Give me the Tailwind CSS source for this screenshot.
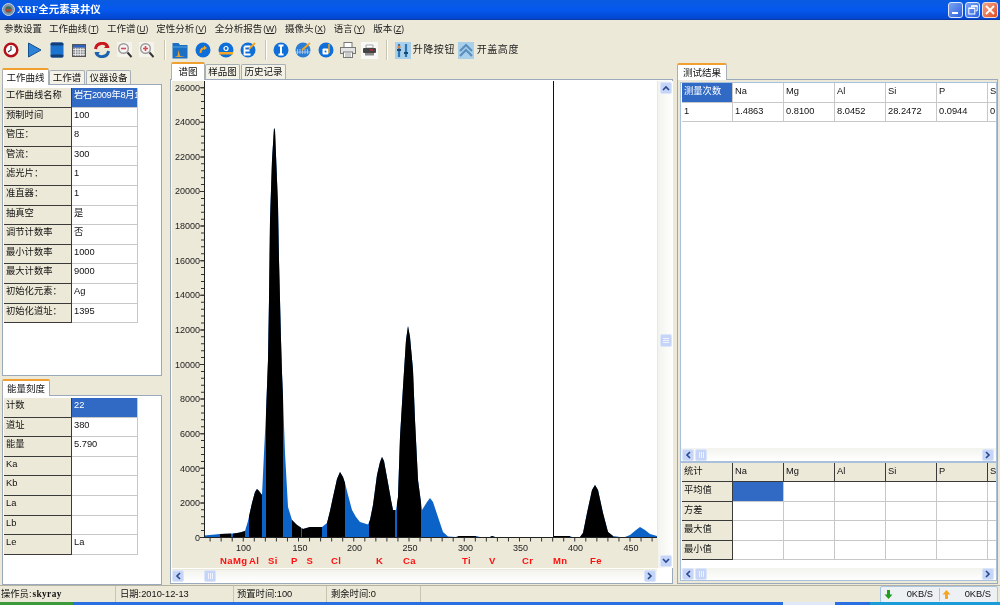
<!DOCTYPE html>
<html lang="zh">
<head>
<meta charset="utf-8">
<title>XRF全元素录井仪</title>
<script src="https://cdn.jsdelivr.net/npm/@tailwindcss/browser@4"></script>
</head>
<body class="m-0 overflow-hidden bg-[#ece9d8]">
<div class="w-[1000px] h-[605px] flex flex-col overflow-hidden bg-[#ece9d8] text-[#111] text-[9.3px] leading-[12px] font-['Liberation_Sans','Noto_Sans_CJK_SC',sans-serif] blur-[0.35px]">

  <!-- title bar -->
  <div class="h-[20px] shrink-0 flex items-center pl-[2px] pr-[2px] bg-gradient-to-b from-[#0a5be0] via-[#0558ee] to-[#0345cf] border-b border-[#0a3aa8]">
    <svg width="13" height="13" viewBox="0 0 13 13" class="shrink-0"><circle cx="6.5" cy="6.5" r="6" fill="#7f95a8" stroke="#c9d4dc" stroke-width="1"/><circle cx="6.5" cy="6.5" r="3.2" fill="#3d6b58"/><path d="M4 6h5v2.5H4z" fill="#b0463d"/></svg>
    <span class="ml-[2px] text-white font-bold text-[10.4px] font-['Liberation_Serif','Noto_Sans_CJK_SC',serif]">XRF全元素录井仪</span>
    <div class="ml-auto flex gap-[2px]">
      <div class="w-[15px] h-[16px] rounded-[3px] border border-[#dfe8fb] bg-gradient-to-br from-[#7ea3f2] to-[#2a5fe0] flex items-end p-[3px]"><div class="w-[6px] h-[2px] bg-white"></div></div>
      <div class="w-[15px] h-[16px] rounded-[3px] border border-[#dfe8fb] bg-gradient-to-br from-[#7ea3f2] to-[#2a5fe0] flex items-center justify-center"><svg width="10" height="10" viewBox="0 0 10 10" fill="none" stroke="#fff"><path d="M3.5 2.5V.8h5.7v5H7.5"/><rect x=".8" y="3" width="6" height="6"/><path d="M1 3.5h6M3.5 1.2h6" stroke-width="1.2"/></svg></div>
      <div class="w-[16px] h-[16px] rounded-[3px] border border-[#f1dbd2] bg-gradient-to-br from-[#f0a488] to-[#dc4a1c] flex items-center justify-center"><svg width="10" height="10" viewBox="0 0 10 10" stroke="#fff" stroke-width="1.8"><path d="M1 1l8 8M9 1L1 9"/></svg></div>
    </div>
  </div>

  <!-- menu -->
  <div class="h-[18px] shrink-0 flex items-center gap-[8px] pl-[4px] text-[9.5px] text-[#222] [&_small]:text-[8.5px] [&_small]:ml-[1px]">
    <span>参数设置</span>
    <span class="-ml-[1px]">工作曲线<small>(<u>T</u>)</small></span>
    <span>工作谱<small>(<u>U</u>)</small></span>
    <span>定性分析<small>(<u>V</u>)</small></span>
    <span>全分析报告<small>(<u>W</u>)</small></span>
    <span>摄像头<small>(<u>X</u>)</small></span>
    <span>语言<small>(<u>Y</u>)</small></span>
    <span>版本<small>(<u>Z</u>)</small></span>
  </div>

  <!-- toolbar -->
  <div class="h-[24px] shrink-0 flex items-center [&>i]:w-[22.7px] [&>i]:h-[20px] [&>i]:flex [&>i]:items-center [&>i]:justify-center [&>i]:shrink-0">
    <i><svg width="16" height="16" viewBox="0 0 16 16"><circle cx="8" cy="8" r="6.3" fill="#fff" stroke="#b3101a" stroke-width="2.4"/><path d="M8 4v4l-3 2" fill="none" stroke="#234" stroke-width="1.1"/></svg></i>
    <i><svg width="15" height="16" viewBox="0 0 15 16"><path d="M1.5 1L14 8 1.5 15z" fill="#2f83d6" stroke="#12508f"/></svg></i>
    <i><svg width="14" height="16" viewBox="0 0 14 16"><rect x=".5" y=".5" width="13" height="15" rx="2" fill="#1d74cf"/><rect x=".5" y=".5" width="13" height="3" rx="1.5" fill="#123f78"/><rect x=".5" y="12.5" width="13" height="3" rx="1.5" fill="#123f78"/></svg></i>
    <i><svg width="14" height="13" viewBox="0 0 14 13"><rect x=".5" y=".5" width="13" height="12" fill="#8b8f96" stroke="#555"/><rect x="1" y="1" width="12" height="2.4" fill="#2e62c0"/><path d="M1 5.5h12M1 8h12M1 10.500h12M3.500 4v8M6 4v8M8.500 4v8M11 4v8" stroke="#eee" stroke-width=".8"/></svg></i>
    <i><svg width="16" height="16" viewBox="0 0 16 16" fill="none"><path d="M1.500 7A6.500 6.500 0 0 1 14 5.500" stroke="#c8161d" stroke-width="3"/><path d="M14.500 9A6.500 6.500 0 0 1 2 10.500" stroke="#1e62ae" stroke-width="3"/><path d="M10 6h5.500L13 2.500z" fill="#c8161d"/><path d="M6 10H.5L3 13.500z" fill="#1e62ae"/></svg></i>
    <i><svg width="16" height="16" viewBox="0 0 16 16"><rect width="15" height="15" fill="#f4f3ec"/><circle cx="6.500" cy="6.500" r="4.800" fill="#f8f4f4" stroke="#9a9a9a" stroke-width="1.400"/><path d="M4 6.500h5" stroke="#d64b55" stroke-width="1.600"/><path d="M10.500 10.500l4 4.500" stroke="#333" stroke-width="2"/></svg></i>
    <i><svg width="16" height="16" viewBox="0 0 16 16"><rect width="15" height="15" fill="#f4f3ec"/><circle cx="6.500" cy="6.500" r="4.800" fill="#f8f4f4" stroke="#9a9a9a" stroke-width="1.400"/><path d="M4 6.500h5M6.500 4v5" stroke="#d64b55" stroke-width="1.600"/><path d="M10.500 10.500l4 4.500" stroke="#333" stroke-width="2"/></svg></i>
    <div class="w-[2px] h-[20px] ml-[5px] mr-[3px] bg-[#c8c5b2] border-r border-white shrink-0"></div>
    <i><svg width="16" height="17" viewBox="0 0 16 17"><path d="M.5 1h6l1.500 2h7.500v13.500H.5z" fill="#1c70c4"/><path d="M.5 5h15" stroke="#5aa0e0"/><path d="M2.500 15l3-1 1-6 1.500 6 5 1z" fill="#f0a030"/></svg></i>
    <i><svg width="16" height="16" viewBox="0 0 16 16"><circle cx="8" cy="8" r="7.500" fill="#0f6fd8"/><path d="M5.500 11c0-3 1.500-5 4.500-5" fill="none" stroke="#f5a623" stroke-width="2"/><path d="M9 3.500l3 2.500-3 2z" fill="#f5a623"/></svg></i>
    <i><svg width="16" height="16" viewBox="0 0 16 16"><circle cx="8" cy="8" r="7.500" fill="#0f6fd8"/><rect x="1" y="10" width="14" height="2.500" fill="#f5a623"/><circle cx="8" cy="6.500" r="2" fill="none" stroke="#fff" stroke-width="1.200"/></svg></i>
    <i><svg width="16" height="16" viewBox="0 0 16 16"><circle cx="8" cy="8" r="7.500" fill="#0f6fd8"/><path d="M4.500 4.500h6M4.500 4.500v8h6M4.500 8.500h5" fill="none" stroke="#fff" stroke-width="1.800"/><path d="M9 7l6-6" stroke="#f5a623" stroke-width="1.800"/></svg></i>
    <div class="w-[2px] h-[20px] ml-[5px] mr-[3px] bg-[#c8c5b2] border-r border-white shrink-0"></div>
    <i><svg width="16" height="16" viewBox="0 0 16 16"><circle cx="8" cy="8" r="7.500" fill="#0f6fd8"/><path d="M5.500 3.500h5M5.500 12.500h5M8 3.500v9" stroke="#fff" stroke-width="2"/></svg></i>
    <i><svg width="17" height="16" viewBox="0 0 17 16"><circle cx="8" cy="8" r="7.500" fill="#2b7cd3"/><path d="M1 10h14M2.500 7v5M5 7v5M7.500 7v5M10 7v5M12.500 7v5" stroke="#a8c9ee" stroke-width=".9"/><path d="M7 8l8-7" stroke="#f5a623" stroke-width="1.800"/></svg></i>
    <i><svg width="16" height="16" viewBox="0 0 16 16"><circle cx="8" cy="8" r="7.500" fill="#0f6fd8"/><rect x="4.500" y="6.500" width="6" height="6" rx="1" fill="#fff"/><circle cx="7.500" cy="9.500" r="1" fill="#0f6fd8"/><path d="M11 2v9" stroke="#f5a623" stroke-width="1.500"/></svg></i>
    <i class="w-[21px]!"><svg width="16" height="16" viewBox="0 0 16 16"><rect x="4" y=".5" width="8" height="5" fill="#fff" stroke="#777"/><rect x=".5" y="5.500" width="15" height="6" fill="#e4e4e4" stroke="#777"/><rect x="3.500" y="10" width="9" height="5.500" fill="#fff" stroke="#777"/><path d="M5 12h6M5 14h6" stroke="#999"/></svg></i>
    <i class="w-[21px]!"><svg width="17" height="17" viewBox="0 0 17 17"><rect width="17" height="17" fill="#f8f8f6"/><path d="M5 3h7v3H5z" fill="#fff" stroke="#888" stroke-width=".7"/><rect x="2" y="6" width="13" height="5" rx="1" fill="#444"/><rect x="4" y="11" width="9" height="2.500" fill="#888"/><rect x="9" y="7.500" width="3" height="1" fill="#e23"/></svg></i>
    <div class="w-[2px] h-[20px] ml-[6px] mr-[7px] bg-[#c8c5b2] border-r border-white shrink-0"></div>
    <svg width="16" height="17" viewBox="0 0 16 17" class="shrink-0"><rect width="16" height="17" fill="#a9d0ea"/><path d="M4 2v13M11 2v13" stroke="#2d74b0" stroke-width="2.200"/><path d="M2 8h4M9 11h4" stroke="#16497a" stroke-width="2"/><circle cx="4" cy="5" r="1.500" fill="#e57d3a"/></svg>
    <span class="ml-[2px] w-[45px] shrink-0 text-[10px] tracking-[0.6px] text-[#222]">升降按钮</span>
    <svg width="16" height="17" viewBox="0 0 16 17" class="shrink-0"><rect width="16" height="17" fill="#a9d0ea"/><path d="M2 9l6-6 6 6M2 14l6-6 6 6" fill="none" stroke="#5b8fc0" stroke-width="2.200"/></svg>
    <span class="ml-[3px] text-[10px] tracking-[0.6px] text-[#222]">开盖高度</span>
  </div>

  <!-- workspace -->
  <div class="h-[523px] shrink-0 flex">

    <!-- left column -->
    <div class="w-[170px] shrink-0 pl-[2px] pr-[8px] flex flex-col">
      <div class="h-[22px] shrink-0 flex items-end">
        <div class="h-[17px] w-[47px] -mb-px z-10 bg-white border-x border-[#a7b0b4] border-t-2 border-t-[#f0a030] rounded-t-[2px] text-center text-[9.5px] leading-[13px] pt-[1px]">工作曲线</div>
        <div class="h-[14.500px] w-[36px] bg-[#f4f2e6] border-x border-t border-[#a7b0b4] rounded-t-[2px] text-center text-[9.5px] leading-[13px]">工作谱</div>
        <div class="h-[14.500px] w-[45px] ml-px bg-[#f4f2e6] border-x border-t border-[#a7b0b4] rounded-t-[2px] text-center text-[9.5px] leading-[13px]">仪器设备</div>
      </div>
      <div class="h-[292px] shrink-0 bg-white border border-[#9aa9bb] pt-[3px] pl-[1px]">
        <div class="grid grid-cols-[68px_66px] auto-rows-[19.600px] w-[134px] [&>b]:font-normal [&>b]:bg-[#ece9d8] [&>b]:border-r-[1.5px] [&>b]:border-b-[1.5px] [&>b]:border-[#3a3a3a] [&>b]:pl-[2px] [&>b]:pt-[1px] [&>span]:border-r [&>span]:border-b [&>span]:border-[#c8c8c8] [&>span]:pl-[2px] [&>span]:pt-[1px]">
          <b>工作曲线名称</b><span class="bg-[#316ac5] text-white overflow-hidden whitespace-nowrap tracking-[-0.3px]">岩石2009年8月1</span>
          <b>预制时间</b><span>100</span>
          <b>管压：</b><span>8</span>
          <b>管流：</b><span>300</span>
          <b>滤光片：</b><span>1</span>
          <b>准直器：</b><span>1</span>
          <b>抽真空</b><span>是</span>
          <b>调节计数率</b><span>否</span>
          <b>最小计数率</b><span>1000</span>
          <b>最大计数率</b><span>9000</span>
          <b>初始化元素：</b><span>Ag</span>
          <b>初始化道址：</b><span>1395</span>
        </div>
      </div>
      <div class="h-[19px] shrink-0 flex items-end">
        <div class="h-[17px] w-[48px] -mb-px z-10 bg-white border-x border-[#a7b0b4] border-t-2 border-t-[#f0a030] rounded-t-[2px] text-center text-[9.5px] leading-[13px] pt-[1px]">能量刻度</div>
      </div>
      <div class="h-[190px] shrink-0 bg-white border border-[#9aa9bb] pt-[2px] pl-[1px]">
        <div class="grid grid-cols-[68px_66px] auto-rows-[19.600px] w-[134px] [&>b]:font-normal [&>b]:bg-[#ece9d8] [&>b]:border-r-[1.5px] [&>b]:border-b-[1.5px] [&>b]:border-[#3a3a3a] [&>b]:pl-[2px] [&>b]:pt-[1px] [&>span]:border-r [&>span]:border-b [&>span]:border-[#c8c8c8] [&>span]:pl-[2px] [&>span]:pt-[1px]">
          <b>计数</b><span class="bg-[#316ac5] text-white">22</span>
          <b>道址</b><span>380</span>
          <b>能量</b><span>5.790</span>
          <b>Ka</b><span></span>
          <b>Kb</b><span></span>
          <b>La</b><span></span>
          <b>Lb</b><span></span>
          <b>Le</b><span>La</span>
        </div>
      </div>
    </div>

    <!-- centre column -->
    <div class="w-[503px] shrink-0 flex flex-col">
      <div class="h-[17px] shrink-0 flex items-end pl-[1px]">
        <div class="h-[18px] w-[34px] -mb-px z-10 bg-white border-x border-[#a7b0b4] border-t-2 border-t-[#f0a030] rounded-t-[2px] text-center text-[9.5px] leading-[13px] pt-[1px]">谱图</div>
        <div class="h-[15px] w-[35px] bg-[#f4f2e6] border-x border-t border-[#a7b0b4] rounded-t-[2px] text-center text-[9.5px] leading-[13px]">样品图</div>
        <div class="h-[15px] w-[45px] ml-[1px] bg-[#f4f2e6] border-x border-t border-[#a7b0b4] rounded-t-[2px] text-center text-[9.5px] leading-[13px]">历史记录</div>
      </div>
      <div class="h-[505px] shrink-0 bg-white border border-[#9aa9bb] pl-[1px] pt-[1px] flex flex-col">
        <div class="h-[487px] shrink-0 flex">
          <svg width="486" height="487" viewBox="172 81 486 487" class="shrink-0 block" font-family="'Liberation Sans',sans-serif" font-size="9" fill="#222">
            <defs>
              <polygon id="spec" points="204,537 204,535.500 215,534.500 220,534 234,533.500 240,532.500 245,531 248,521 252,503 255,492 257,489 259,491 262,495 262.500,485 264,453 266,413 268,360 269,300 270,220 272,160 274,128 275,130 276,155 278,205 279,260 280,300 281,340 282,373 283,397 285,453 288,507 292,520 297,525 303,529 310,527 322,527 327,523 330,511 333,497 337,479 340,472 343,477 345,483 348,495 352,510 356,517 360,522 368,524.500 370,520 373,505 377,475 380,462 382,457 384,461 388,483 391,500 393,510 396,510 398,497 400,437 403,387 406,340 408,326 410,337 413,370 415,420 418,480 422,510 427,502 430,498 433,502 438,517 443,532 448,536.500 456,537 458,536 476,536 480,537 490,537 492,536 495,537 553,537 553,536 570,536 572,537 580,537 583,533 587,513 592,490 595,485 598,490 603,513 608,532 613,536 620,537 625,537 630,535 636,530 640,527 645,530 650,534 657,536 657,537"/>
              <clipPath id="black">
                <rect x="220" y="81" width="11" height="460"/>
                <rect x="233" y="81" width="12" height="460"/>
                <rect x="249" y="81" width="13" height="460"/>
                <rect x="266" y="81" width="17" height="460"/>
                <rect x="292" y="81" width="9" height="460"/>
                <rect x="302" y="81" width="20" height="460"/>
                <rect x="327" y="81" width="18" height="460"/>
                <rect x="369" y="81" width="26" height="460"/>
                <rect x="397" y="81" width="24" height="460"/>
                <rect x="458" y="81" width="18" height="460"/>
                <rect x="490" y="81" width="5" height="460"/>
                <rect x="553" y="81" width="17" height="460"/>
                <rect x="580" y="81" width="33" height="460"/>
              </clipPath>
            </defs>
            <rect x="172" y="81" width="486" height="487" fill="#ece9d8"/>
            <rect x="204.500" y="81" width="452.500" height="456.500" fill="#fff"/>
            <use href="#spec" fill="#0b63c8"/>
            <use href="#spec" fill="#000" clip-path="url(#black)"/>
            <path d="M553.500 81v456" stroke="#111" stroke-width="1"/>
            <path d="M204.500 81v457M204 537.500h453" stroke="#222" stroke-width="1" fill="none"/>
            <line x1="202.500" x2="202.500" y1="87.200" y2="538" stroke="#333" stroke-width="3" stroke-dasharray="1 5.920"/>
            <line x1="202" x2="202" y1="87.200" y2="538" stroke="#333" stroke-width="4" stroke-dasharray="1 33.600"/>
            <line y1="539.500" y2="539.500" x1="209.600" x2="657" stroke="#333" stroke-width="4" stroke-dasharray="1 10.050"/>
            <g text-anchor="end">
              <text x="200" y="91">26000</text><text x="200" y="125">24000</text><text x="200" y="160">22000</text><text x="200" y="194">20000</text><text x="200" y="229">18000</text><text x="200" y="264">16000</text><text x="200" y="298">14000</text><text x="200" y="333">12000</text><text x="200" y="368">10000</text><text x="200" y="402">8000</text><text x="200" y="437">6000</text><text x="200" y="472">4000</text><text x="200" y="506">2000</text><text x="200" y="541">0</text>
            </g>
            <g text-anchor="middle">
              <text x="243.500" y="551">100</text><text x="300" y="551">150</text><text x="354.500" y="551">200</text><text x="410" y="551">250</text><text x="465.500" y="551">300</text><text x="520.500" y="551">350</text><text x="575.500" y="551">400</text><text x="631" y="551">450</text>
            </g>
            <g fill="#ff1010" font-weight="700" font-size="9.500" letter-spacing=".4">
              <text x="220" y="564">Na</text><text x="233" y="564">Mg</text><text x="249" y="564">Al</text><text x="268" y="564">Si</text><text x="291" y="564">P</text><text x="306.500" y="564">S</text><text x="331" y="564">Cl</text><text x="376" y="564">K</text><text x="403" y="564">Ca</text><text x="462" y="564">Ti</text><text x="489" y="564">V</text><text x="522" y="564">Cr</text><text x="553" y="564">Mn</text><text x="590" y="564">Fe</text>
            </g>
          </svg>
          <!-- vertical scrollbar -->
          <div class="w-[15px] shrink-0 flex flex-col items-center bg-gradient-to-r from-[#f3f3ee] to-white pt-[1px]">
            <div class="w-[12px] h-[12px] rounded-[2px] bg-[#c5d4f7] border border-[#dce6fb] flex items-center justify-center"><svg width="8" height="6" viewBox="0 0 8 6" fill="none" stroke="#26488f" stroke-width="1.600"><path d="M1 5l3-3 3 3"/></svg></div>
            <div class="w-[12px] h-[13px] mt-[240px] rounded-[2px] bg-[#c5d4f7] border border-[#dce6fb] flex flex-col items-center justify-center gap-[1px]"><i class="block w-[6px] h-px bg-[#eef3fe]"></i><i class="block w-[6px] h-px bg-[#eef3fe]"></i><i class="block w-[6px] h-px bg-[#eef3fe]"></i></div>
            <div class="w-[12px] h-[12px] mt-auto mb-[1px] rounded-[2px] bg-[#c5d4f7] border border-[#dce6fb] flex items-center justify-center"><svg width="8" height="6" viewBox="0 0 8 6" fill="none" stroke="#26488f" stroke-width="1.600"><path d="M1 1l3 3 3-3"/></svg></div>
          </div>
        </div>
        <!-- horizontal scrollbar -->
        <div class="h-[13px] mt-[1px] w-[485px] shrink-0 flex items-center bg-gradient-to-b from-[#f3f3ee] to-white border-t border-[#ece9d8]">
          <div class="w-[12px] h-[12px] rounded-[2px] bg-[#c5d4f7] border border-[#dce6fb] flex items-center justify-center"><svg width="6" height="8" viewBox="0 0 6 8" fill="none" stroke="#26488f" stroke-width="1.600"><path d="M5 1L2 4l3 3"/></svg></div>
          <div class="w-[12px] h-[12px] ml-[20px] rounded-[2px] bg-[#c5d4f7] border border-[#dce6fb] flex items-center justify-center gap-[1px]"><i class="block h-[6px] w-px bg-[#eef3fe]"></i><i class="block h-[6px] w-px bg-[#eef3fe]"></i><i class="block h-[6px] w-px bg-[#eef3fe]"></i></div>
          <div class="w-[12px] h-[12px] ml-auto mr-[1px] rounded-[2px] bg-[#c5d4f7] border border-[#dce6fb] flex items-center justify-center"><svg width="6" height="8" viewBox="0 0 6 8" fill="none" stroke="#26488f" stroke-width="1.600"><path d="M1 1l3 3-3 3"/></svg></div>
        </div>
      </div>
    </div>

    <!-- right column -->
    <div class="ml-[4px] w-[323px] shrink-0 flex flex-col">
      <div class="h-[17px] shrink-0 flex items-end">
        <div class="h-[17px] w-[50px] -mb-px z-10 bg-white border-x border-[#a7b0b4] border-t-2 border-t-[#f0a030] rounded-t-[2px] text-center text-[9.5px] leading-[13px] pt-[1px]">测试结果</div>
      </div>
      <div class="h-[505px] shrink-0 bg-[#ece9d8] border border-[#9aa9bb] pl-[2px] pt-[2px] pb-[2px] flex flex-col w-[321px]">
        <div class="h-[500px] border border-[#a8c0dc] bg-white flex flex-col w-[317px] overflow-hidden">
          <div class="h-[365px] shrink-0">
            <div class="grid grid-cols-[51px_51px_51px_51px_51px_51px_20px] auto-rows-[19.500px] w-[326px] pl-[1px] [&>span]:border-r [&>span]:border-b [&>span]:border-[#c8c8c8] [&>span]:pl-[2px] [&>span]:pt-[2px]">
              <span class="bg-[#316ac5] text-white">测量次数</span><span>Na</span><span>Mg</span><span>Al</span><span>Si</span><span>P</span><span>S</span>
              <span>1</span><span>1.4863</span><span>0.8100</span><span>8.0452</span><span>28.2472</span><span>0.0944</span><span>0.</span>
            </div>
          </div>
          <div class="h-[13px] shrink-0 flex items-center px-[1px] bg-gradient-to-b from-[#f3f3ee] to-white">
            <div class="w-[12px] h-[12px] rounded-[2px] bg-[#c5d4f7] border border-[#dce6fb] flex items-center justify-center"><svg width="6" height="8" viewBox="0 0 6 8" fill="none" stroke="#26488f" stroke-width="1.600"><path d="M5 1L2 4l3 3"/></svg></div>
            <div class="w-[12px] h-[12px] ml-[1px] rounded-[2px] bg-[#c5d4f7] border border-[#dce6fb] flex items-center justify-center gap-[1px]"><i class="block h-[6px] w-px bg-[#eef3fe]"></i><i class="block h-[6px] w-px bg-[#eef3fe]"></i><i class="block h-[6px] w-px bg-[#eef3fe]"></i></div>
            <div class="w-[12px] h-[12px] ml-auto mr-[1px] rounded-[2px] bg-[#c5d4f7] border border-[#dce6fb] flex items-center justify-center"><svg width="6" height="8" viewBox="0 0 6 8" fill="none" stroke="#26488f" stroke-width="1.600"><path d="M1 1l3 3-3 3"/></svg></div>
          </div>
          <div class="h-[1.500px] shrink-0 bg-[#a8c0dc]"></div>
          <div class="h-[105px] shrink-0">
            <div class="grid grid-cols-[51px_51px_51px_51px_51px_51px_20px] auto-rows-[19.600px] w-[326px] pl-[1px] [&>b]:font-normal [&>b]:bg-[#ece9d8] [&>b]:border-r-[1.5px] [&>b]:border-b-[1.5px] [&>b]:border-[#3a3a3a] [&>b]:pl-[2px] [&>b]:pt-[2px] [&>span]:border-r [&>span]:border-b [&>span]:border-[#c8c8c8]">
              <b>统计</b><b>Na</b><b>Mg</b><b>Al</b><b>Si</b><b>P</b><b>S</b>
              <b>平均值</b><span class="bg-[#316ac5]"></span><span></span><span></span><span></span><span></span><span></span>
              <b>方差</b><span></span><span></span><span></span><span></span><span></span><span></span>
              <b>最大值</b><span></span><span></span><span></span><span></span><span></span><span></span>
              <b>最小值</b><span></span><span></span><span></span><span></span><span></span><span></span>
            </div>
          </div>
          <div class="h-[13px] shrink-0 flex items-center px-[1px] bg-gradient-to-b from-[#f3f3ee] to-white">
            <div class="w-[12px] h-[12px] rounded-[2px] bg-[#c5d4f7] border border-[#dce6fb] flex items-center justify-center"><svg width="6" height="8" viewBox="0 0 6 8" fill="none" stroke="#26488f" stroke-width="1.600"><path d="M5 1L2 4l3 3"/></svg></div>
            <div class="w-[12px] h-[12px] ml-[1px] rounded-[2px] bg-[#c5d4f7] border border-[#dce6fb] flex items-center justify-center gap-[1px]"><i class="block h-[6px] w-px bg-[#eef3fe]"></i><i class="block h-[6px] w-px bg-[#eef3fe]"></i><i class="block h-[6px] w-px bg-[#eef3fe]"></i></div>
            <div class="w-[12px] h-[12px] ml-auto mr-[1px] rounded-[2px] bg-[#c5d4f7] border border-[#dce6fb] flex items-center justify-center"><svg width="6" height="8" viewBox="0 0 6 8" fill="none" stroke="#26488f" stroke-width="1.600"><path d="M1 1l3 3-3 3"/></svg></div>
          </div>
        </div>
      </div>
    </div>
  </div>

  <!-- status bar -->
  <div class="h-[17px] shrink-0 flex items-center border-t border-[#b5b2a2] text-[9.300px]">
    <div class="w-[116px] pl-[1px] shrink-0 border-r border-[#c8c5b2] h-full flex items-center">操作员:<span class="font-['Liberation_Serif',serif] font-bold tracking-[0.4px] ml-[1px]">skyray</span></div>
    <div class="w-[118px] pl-[4px] shrink-0 border-r border-[#c8c5b2] h-full flex items-center">日期:2010-12-13</div>
    <div class="w-[93px] pl-[3px] shrink-0 border-r border-[#c8c5b2] h-full flex items-center">预置时间:100</div>
    <div class="w-[94px] pl-[4px] shrink-0 border-r border-[#c8c5b2] h-full flex items-center">剩余时间:0</div>
    <div class="ml-[459px] w-[118px] h-[17px] shrink-0 flex items-center rounded-[2px] bg-[#eef1f4] border border-[#a9c3e2]">
      <svg width="9" height="9" viewBox="0 0 9 9" class="ml-[3px] shrink-0"><path d="M3 0h3v4.500h2.500L4.500 9 .5 4.500H3z" fill="#1ea01e"/></svg>
      <span class="w-[31px] ml-[9px] text-right shrink-0">0KB/S</span>
      <div class="w-px h-[13px] bg-[#b9c4d2] ml-[6px]"></div>
      <svg width="9" height="9" viewBox="0 0 9 9" class="ml-[2px] shrink-0"><path d="M3 9h3V4.500h2.500L4.500 0 .5 4.500H3z" fill="#f5a623"/></svg>
      <span class="w-[30px] ml-[10px] text-right shrink-0">0KB/S</span>
    </div>
  </div>

  <!-- desktop taskbar sliver -->
  <div class="h-[3px] shrink-0 flex bg-[#2a6fe0]">
    <div class="w-[73px] bg-[#3c9a3c]"></div>
    <div class="ml-[710px] w-[52px] bg-[#dfe8f8]"></div>
    <div class="ml-[35px] flex-1 bg-[#1b9cd8]"></div>
  </div>
</div>
</body>
</html>
